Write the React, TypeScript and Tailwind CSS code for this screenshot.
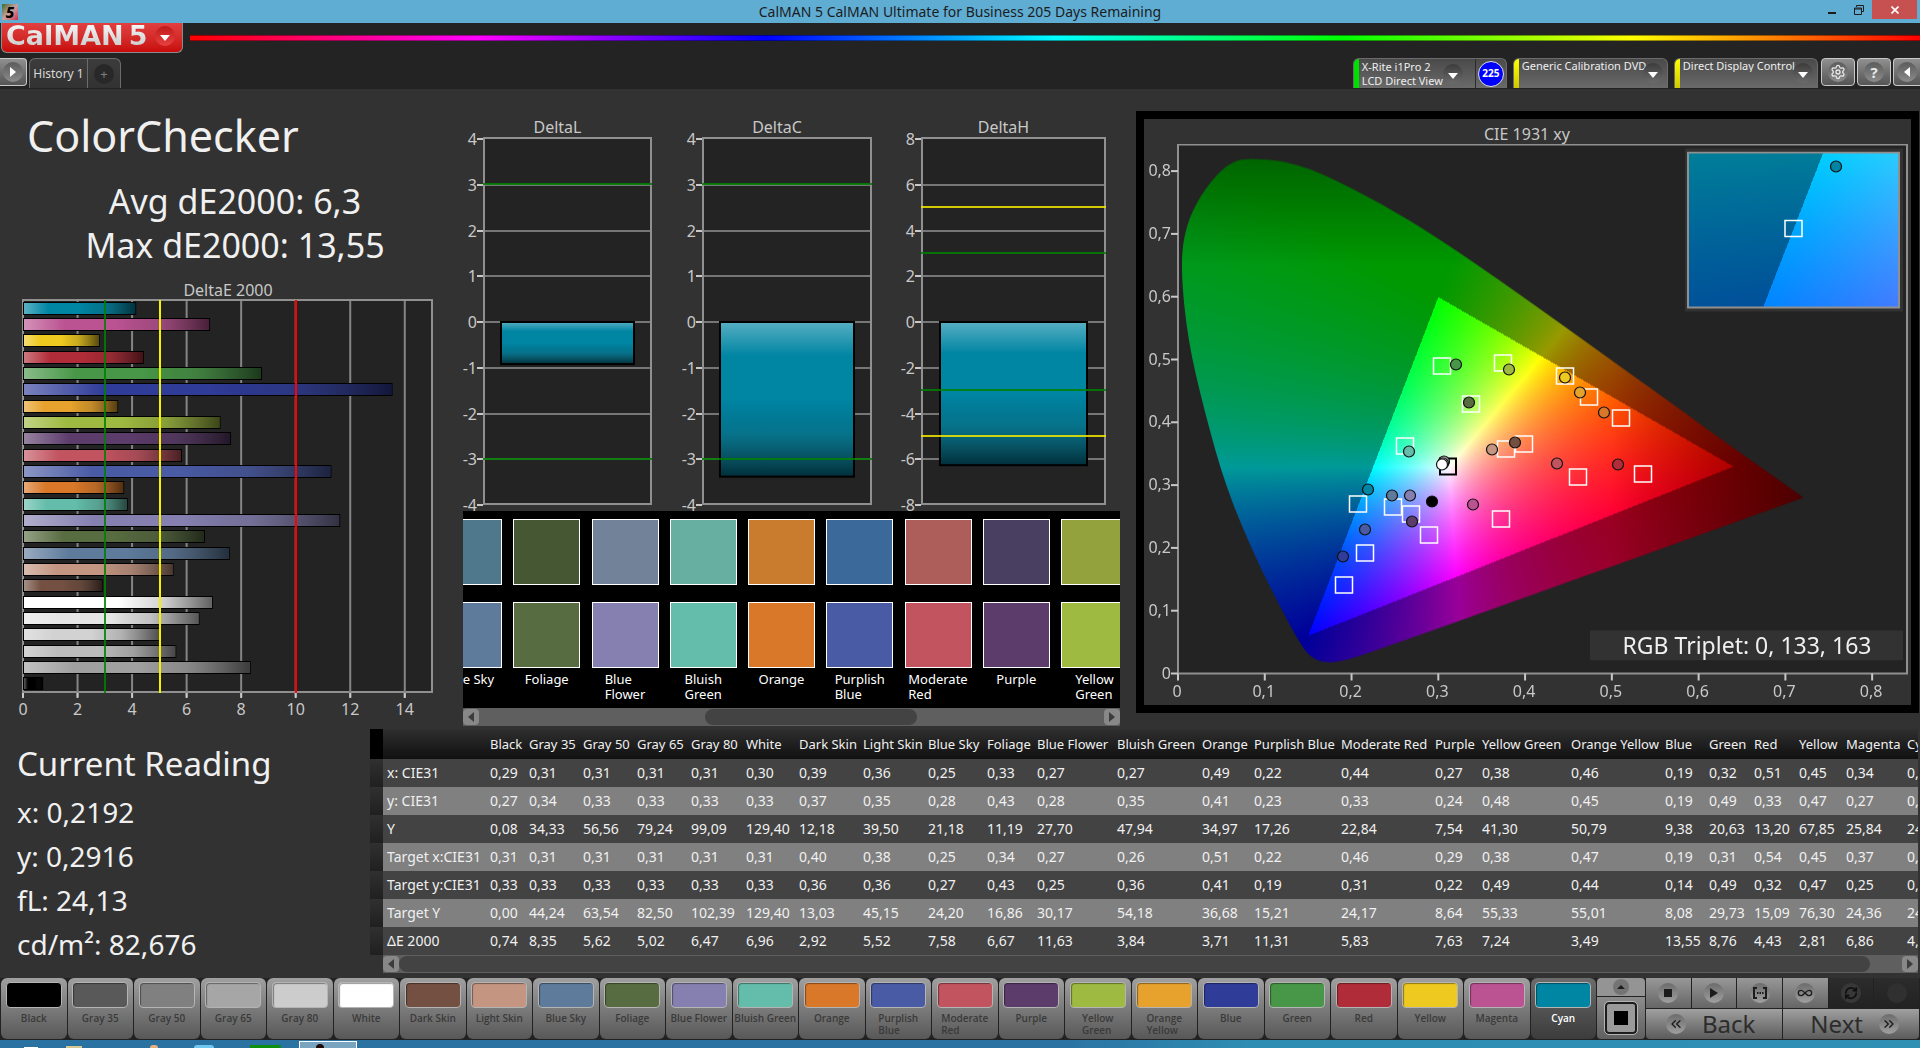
import { useEffect, useRef } from 'react';
import type { ReactNode } from 'react';
import { ChevronsLeft, ChevronsRight, Infinity as InfinityIcon, RefreshCw, Settings } from 'lucide-react';

type Patch = {
  name: string;
  color: string;
  width: number;
  values: string[];
};

const ROW_LABELS = ['x: CIE31', 'y: CIE31', 'Y', 'Target x:CIE31', 'Target y:CIE31', 'Target Y', 'ΔE 2000'];

const PATCHES: Patch[] = [
  { name: 'Black', color: '#000000', width: 39, values: ['0,29', '0,27', '0,08', '0,31', '0,33', '0,00', '0,74'] },
  { name: 'Gray 35', color: '#595959', width: 54, values: ['0,31', '0,34', '34,33', '0,31', '0,33', '44,24', '8,35'] },
  { name: 'Gray 50', color: '#808080', width: 54, values: ['0,31', '0,33', '56,56', '0,31', '0,33', '63,54', '5,62'] },
  { name: 'Gray 65', color: '#a6a6a6', width: 54, values: ['0,31', '0,33', '79,24', '0,31', '0,33', '82,50', '5,02'] },
  { name: 'Gray 80', color: '#cccccc', width: 55, values: ['0,31', '0,33', '99,09', '0,31', '0,33', '102,39', '6,47'] },
  { name: 'White', color: '#ffffff', width: 53, values: ['0,30', '0,33', '129,40', '0,31', '0,33', '129,40', '6,96'] },
  { name: 'Dark Skin', color: '#735041', width: 64, values: ['0,39', '0,37', '12,18', '0,40', '0,36', '13,03', '2,92'] },
  { name: 'Light Skin', color: '#c49682', width: 65, values: ['0,36', '0,35', '39,50', '0,38', '0,36', '45,15', '5,52'] },
  { name: 'Blue Sky', color: '#5e7b9c', width: 59, values: ['0,25', '0,28', '21,18', '0,25', '0,27', '24,20', '7,58'] },
  { name: 'Foliage', color: '#586c41', width: 50, values: ['0,33', '0,43', '11,19', '0,34', '0,43', '16,86', '6,67'] },
  { name: 'Blue Flower', color: '#8580b0', width: 80, values: ['0,27', '0,28', '27,70', '0,27', '0,25', '30,17', '11,63'] },
  { name: 'Bluish Green', color: '#64bdaa', width: 85, values: ['0,27', '0,35', '47,94', '0,26', '0,36', '54,18', '3,84'] },
  { name: 'Orange', color: '#d97829', width: 52, values: ['0,49', '0,41', '34,97', '0,51', '0,41', '36,68', '3,71'] },
  { name: 'Purplish Blue', color: '#4a5ba5', width: 87, values: ['0,22', '0,23', '17,26', '0,22', '0,19', '15,21', '11,31'] },
  { name: 'Moderate Red', color: '#c25460', width: 94, values: ['0,44', '0,33', '22,84', '0,46', '0,31', '24,17', '5,83'] },
  { name: 'Purple', color: '#5c3c6b', width: 47, values: ['0,27', '0,24', '7,54', '0,29', '0,22', '8,64', '7,63'] },
  { name: 'Yellow Green', color: '#9fba40', width: 89, values: ['0,38', '0,48', '41,30', '0,38', '0,49', '55,33', '7,24'] },
  { name: 'Orange Yellow', color: '#e6a22c', width: 94, values: ['0,46', '0,45', '50,79', '0,47', '0,44', '55,01', '3,49'] },
  { name: 'Blue', color: '#2f3c98', width: 44, values: ['0,19', '0,19', '9,38', '0,19', '0,14', '8,08', '13,55'] },
  { name: 'Green', color: '#489647', width: 45, values: ['0,32', '0,49', '20,63', '0,31', '0,49', '29,73', '8,76'] },
  { name: 'Red', color: '#b02c38', width: 45, values: ['0,51', '0,33', '13,20', '0,54', '0,32', '15,09', '4,43'] },
  { name: 'Yellow', color: '#eec91f', width: 47, values: ['0,45', '0,47', '67,85', '0,45', '0,47', '76,30', '2,81'] },
  { name: 'Magenta', color: '#bb5392', width: 61, values: ['0,34', '0,27', '25,84', '0,37', '0,25', '24,36', '6,86'] },
  { name: 'Cyan', color: '#0085a3', width: 60, values: ['0,22', '0,29', '24,13', '0,21', '0,27', '24,66', '4,15'] },
];

const BAR_COLORS: Record<string, string> = {
  'Gray 35': '#a0a0a0',
  'Gray 50': '#bcbcbc',
  'Gray 65': '#d2d2d2',
  'Gray 80': '#e6e6e6',
};

const COMPARISON = [
  { lines: ['Blue Sky'], actual: '#4f788c', target: '#5e7b9c' },
  { lines: ['Foliage'], actual: '#455833', target: '#586c41' },
  { lines: ['Blue', 'Flower'], actual: '#728299', target: '#8580b0' },
  { lines: ['Bluish', 'Green'], actual: '#67afa1', target: '#64bdaa' },
  { lines: ['Orange'], actual: '#c97b2e', target: '#d97829' },
  { lines: ['Purplish', 'Blue'], actual: '#3b6999', target: '#4a5ba5' },
  { lines: ['Moderate', 'Red'], actual: '#ad5d5a', target: '#c25460' },
  { lines: ['Purple'], actual: '#493f60', target: '#5c3c6b' },
  { lines: ['Yellow', 'Green'], actual: '#93a23c', target: '#9fba40' },
];

// ---- DeltaE 2000 ----

function DeltaEChart() {
  const left = 24;
  const unit = 27.27;
  const rowHeight = 392 / 24;
  const bars = [...PATCHES].reverse();
  return (
    <svg viewBox="1 279 462 440" className="mt-3 block w-[462px]" fill="#c8c8c8">
      <defs>
        <linearGradient id="shadeX">
          <stop offset="0" stopColor="#fff" stopOpacity="0.36" />
          <stop offset="0.22" stopColor="#fff" stopOpacity="0" />
          <stop offset="0.5" stopColor="#000" stopOpacity="0" />
          <stop offset="0.72" stopColor="#222" stopOpacity="0.18" />
          <stop offset="1" stopColor="#000" stopOpacity="0.62" />
        </linearGradient>
      </defs>
      <text x="229" y="296" fontSize="16" textAnchor="middle">DeltaE 2000</text>
      <rect x="24" y="300" width="409" height="392" fill="#232323" stroke="#909090" strokeWidth="2" />
      {[2, 4, 6, 8, 10, 12, 14].map((v) => (
        <rect key={v} x={left + v * unit - 1} y="301" width="2" height="396" fill="#858585" />
      ))}
      {[0, 2, 4, 6, 8, 10, 12, 14].map((v) => (
        <g key={v}>
          <rect x={left + v * unit - 1} y="693" width="2" height="5" fill="#c8c8c8" />
          <text x={left + v * unit} y="715" fontSize="16" textAnchor="middle">{v}</text>
        </g>
      ))}
      {bars.map((p, i) => {
        const w = parseFloat(p.values[6].replace(',', '.')) * unit;
        const y = Math.round(300.5 + i * rowHeight + 1);
        return (
          <g key={p.name}>
            <rect x="24" y={y} width={w} height="13" fill="#000" />
            <rect x="25" y={y + 1} width={w - 2} height="11" fill={BAR_COLORS[p.name] ?? p.color} />
            <rect x="25" y={y + 1} width={w - 2} height="11" fill="url(#shadeX)" />
          </g>
        );
      })}
      <rect x="105" y="300" width="2" height="393" fill="#008000" fillOpacity="0.85" />
      <rect x="160" y="300" width="2" height="393" fill="#f0f000" />
      <rect x="296" y="300" width="2" height="393" fill="#ff0000" />
    </svg>
  );
}

// ---- DeltaL / DeltaC / DeltaH ----

type DeltaProps = {
  title: string;
  x: number;
  width: number;
  max: number;
  value: number;
  limits: { at: number; color: string }[];
};

function DeltaPlot({ title, x, width, max, value, limits }: DeltaProps) {
  const zero = 322;
  const unit = 183 / max;
  const step = max / 4;
  const ticks = [4, 3, 2, 1, 0, -1, -2, -3, -4].map((t) => t * step);
  const barX = x + Math.round(width * 0.1);
  const barW = width - 2 * Math.round(width * 0.1);
  const barH = Math.abs(value) * unit;
  return (
    <g>
      <text x={x + width / 2 - 10} y="133" fontSize="16" textAnchor="middle">{title}</text>
      <rect x={x} y="138" width={width} height="366" fill="#232323" />
      {ticks.map((t) => (
        <g key={t}>
          {Math.abs(t) < max && (
            <rect x={x} y={Math.round(zero - t * unit) - 1} width={width} height="2" fill="#767676" />
          )}
          <rect x={x - 7} y={Math.round(zero - t * unit) - 1} width="6" height="2" fill="#c8c8c8" />
          <text x={x - 7} y={zero - t * unit + 6} fontSize="16" textAnchor="end">{t}</text>
        </g>
      ))}
      <rect x={x} y="138" width={width} height="366" fill="none" stroke="#909090" strokeWidth="2" />
      <rect x={barX} y={zero} width={barW} height={barH} fill="#0085a3" />
      <rect x={barX} y={zero} width={barW} height={barH} fill="url(#shadeY)" stroke="#000" strokeWidth="2" />
      {limits.map((l) => (
        <rect key={l.at} x={x - 1} y={Math.floor(zero - l.at * unit) - 1} width={width + 2} height="2" fill={l.color} fillOpacity="0.85" />
      ))}
    </g>
  );
}

function DeltaCharts() {
  const green = '#008000';
  const yellow = '#f0e800';
  return (
    <svg viewBox="462 89 658 422" className="block w-[658px]" fill="#c8c8c8">
      <defs>
        <linearGradient id="shadeY" x1="0" y1="0" x2="0" y2="1">
          <stop offset="0" stopColor="#fff" stopOpacity="0.34" />
          <stop offset="0.22" stopColor="#fff" stopOpacity="0" />
          <stop offset="0.5" stopColor="#000" stopOpacity="0" />
          <stop offset="0.72" stopColor="#222" stopOpacity="0.18" />
          <stop offset="1" stopColor="#000" stopOpacity="0.65" />
        </linearGradient>
      </defs>
      <DeltaPlot title="DeltaL" x={484} width={167} max={4} value={-0.92}
        limits={[{ at: 3, color: green }, { at: -3, color: green }]} />
      <DeltaPlot title="DeltaC" x={703} width={168} max={4} value={-3.38}
        limits={[{ at: 3, color: green }, { at: -3, color: green }]} />
      <DeltaPlot title="DeltaH" x={922} width={183} max={8} value={-6.26}
        limits={[{ at: 5, color: yellow }, { at: 3, color: green }, { at: -3, color: green }, { at: -5, color: yellow }]} />
    </svg>
  );
}

// ---- CIE 1931 xy ----

const X0 = 1178;
const Y0 = 672;
const SX = 867.7;
const SY = 628;

const LOCUS: [number, number][] = [
  [0.169, 0.0175], [0.158, 0.022], [0.145, 0.037], [0.12, 0.1], [0.09, 0.182], [0.0557, 0.2945],
  [0.03, 0.42], [0.011, 0.534], [0.0035, 0.64], [0.0065, 0.7], [0.0208, 0.7516], [0.0445, 0.796],
  [0.065, 0.818], [0.0847, 0.821], [0.115, 0.818], [0.138, 0.811], [0.1662, 0.797], [0.2365, 0.748],
  [0.3016, 0.6923], [0.3731, 0.6245], [0.4441, 0.5547], [0.5125, 0.4866], [0.5752, 0.4242], [0.627, 0.3725],
  [0.7187, 0.2825], [0.7205, 0.2805], [0.7187, 0.2795], [0.2186, 0.031], [0.185, 0.0185],
];

function tracePath(ctx: CanvasRenderingContext2D, toPx: (p: [number, number]) => [number, number]) {
  const pts = LOCUS.map(toPx);
  const n = pts.length;
  ctx.beginPath();
  for (let i = 0; i <= n; i++) {
    const [ax, ay] = pts[i % n];
    const [bx, by] = pts[(i + 1) % n];
    if (i === 0) ctx.moveTo((ax + bx) / 2, (ay + by) / 2);
    else ctx.quadraticCurveTo(ax, ay, (ax + bx) / 2, (ay + by) / 2);
  }
  ctx.closePath();
}

function chromaColor(x: number, y: number): [number, number, number] {
  const X = x / y;
  const Z = (1 - x - y) / y;
  const r = 3.2406 * X - 1.5372 - 0.4986 * Z;
  const g = -0.9689 * X + 1.8758 + 0.0415 * Z;
  const b = 0.0557 * X - 0.204 + 1.057 * Z;
  const high = Math.max(r, g, b);
  // colors outside Rec.709 are clamped and dimmed
  let level = Math.min(r, g, b) < 0 ? 0.6 : 1;
  if (x > 0.5) level *= Math.max(0.5, 1 - (x - 0.5) * 2.3);
  if (y > 0.65) level *= 1 - (y - 0.65) * 2;
  const enc = (v: number) => (255 * level * Math.max(0, v)) / high;
  return [enc(r), enc(g), enc(b)];
}

type GamutProps = { x0: number; x1: number; y0: number; y1: number; width: number; height: number; clip?: boolean };

function GamutCanvas({ x0, x1, y0, y1, width, height, clip }: GamutProps) {
  const ref = useRef<HTMLCanvasElement>(null);

  useEffect(() => {
    const ctx = ref.current?.getContext('2d');
    if (!ctx) return;
    const img = ctx.createImageData(width, height);
    for (let j = 0; j < height; j++) {
      for (let i = 0; i < width; i++) {
        const x = x0 + ((i + 0.5) / width) * (x1 - x0);
        const y = Math.max(0.001, y1 - ((j + 0.5) / height) * (y1 - y0));
        const [r, g, b] = chromaColor(x, y);
        const k = (j * width + i) * 4;
        img.data[k] = r;
        img.data[k + 1] = g;
        img.data[k + 2] = b;
        img.data[k + 3] = 255;
      }
    }
    ctx.putImageData(img, 0, 0);
    if (clip) {
      ctx.globalCompositeOperation = 'destination-in';
      tracePath(ctx, ([x, y]) => [((x - x0) / (x1 - x0)) * width, ((y1 - y) / (y1 - y0)) * height]);
      ctx.fill();
      ctx.globalCompositeOperation = 'source-over';
    }
  }, [x0, x1, y0, y1, width, height, clip]);

  return <canvas ref={ref} width={width} height={height} className="block" />;
}

const TARGETS = [
  [1442, 364], [1503, 361], [1565, 374], [1589, 395], [1621, 416], [1471, 402], [1405, 444], [1506, 447],
  [1524, 442], [1578, 475], [1643, 472], [1358, 502], [1393, 505], [1411, 512], [1429, 533], [1501, 517],
  [1365, 551], [1344, 583],
];

const MEASURED: [number, number, string][] = [
  [1456, 363, '#489647'], [1509, 368, '#9fba40'], [1565, 376, '#eec91f'], [1580, 391, '#e6a22c'],
  [1604, 411, '#d97829'], [1469, 401, '#586c41'], [1409, 450, '#64bdaa'], [1492, 448, '#c49682'],
  [1515, 441, '#735041'], [1557, 462, '#c25460'], [1618, 463, '#b02c38'], [1368, 488, '#0085a3'],
  [1392, 494, '#5e7b9c'], [1410, 494, '#8580b0'], [1432, 500, '#000000'], [1473, 503, '#bb5392'],
  [1412, 520, '#5c3c6b'], [1365, 528, '#4a5ba5'], [1343, 555, '#2f3c98'], [1444, 460, '#a0a0a0'],
  [1443, 462, '#dddddd'], [1442, 463, '#ffffff'],
];

function CieChart() {
  const ticks = [0, 1, 2, 3, 4, 5, 6, 7, 8];
  const label = (t: number) => (t === 0 ? '0' : `0,${t}`);
  return (
    <svg viewBox="1144 118 767 585" className="block h-full w-full" fill="#c8c8c8">
      <text x="1527" y="138" fontSize="16" textAnchor="middle">CIE 1931 xy</text>
      <rect x="1178" y="143" width="729" height="529" fill="#232323" />
      <foreignObject x="1178" y="143" width="729" height="529">
        <GamutCanvas x0={0} x1={0.84} y0={0} y1={0.8434} width={729} height={529} clip />
      </foreignObject>
      <rect x="1178" y="143" width="729" height="529" fill="none" stroke="#909090" strokeWidth="2" />
      {ticks.map((t) => (
        <g key={t}>
          <rect x={X0 + t * SX * 0.1 - 1} y="672" width="2" height="7" />
          <text x={X0 + t * SX * 0.1 - 1} y="695" fontSize="16" textAnchor="middle">{label(t)}</text>
          <rect x="1171" y={Y0 - t * SY * 0.1 - 1} width="7" height="2" />
          <text x="1171" y={Y0 - t * SY * 0.1 + 5} fontSize="16" textAnchor="end">{label(t)}</text>
        </g>
      ))}

      {TARGETS.map(([x, y]) => (
        <rect key={`${x}-${y}`} x={x - 8.5} y={y - 7.5} width="17" height="16" fill="none" stroke="#fff" strokeWidth="1.5" />
      ))}
      <rect x="1440" y="457" width="16" height="16" fill="none" stroke="#000" strokeWidth="2" />
      {MEASURED.map(([x, y, c]) => (
        <circle key={`${x}-${y}`} cx={x} cy={y} r="5.5" fill={c} stroke="#111" strokeWidth="1.2" />
      ))}

      <rect x="1685" y="147" width="218" height="163" fill="#323232" />
      <foreignObject x="1688" y="151" width="211" height="155">
        <GamutCanvas x0={0.181} x1={0.237} y0={0.2433} y1={0.3009} width={211} height={155} />
      </foreignObject>
      <rect x="1688" y="151" width="211" height="155" fill="none" stroke="#909090" strokeWidth="2" />
      <rect x="1785" y="219" width="17" height="16" fill="none" stroke="#fff" strokeWidth="1.5" />
      <circle cx="1836" cy="165" r="5.5" fill="#0085a3" stroke="#111" strokeWidth="1.2" />

      <rect x="1590" y="629" width="313" height="30" fill="#323232" />
      <text x="1747" y="652" fontSize="23" fill="#f0f0f0" textAnchor="middle">RGB Triplet: 0, 133, 163</text>
    </svg>
  );
}

// ---- Shared bits ----

function Scrollbar({ thumb }: { thumb: string }) {
  return (
    <div className="flex h-[18px] items-center bg-[#5f5f5f]">
      <button aria-label="Scroll left" className="flex h-4 w-4 items-center justify-center rounded bg-[#888888]">
        <svg viewBox="0 0 6 10" className="h-[10px] w-[6px]"><path d="M6 0v10L0 5z" fill="#3c3c3c" /></svg>
      </button>
      <div className="flex h-4 min-w-0 flex-1">
        <div className={`h-4 rounded-lg bg-[#434343] ${thumb}`} />
      </div>
      <button aria-label="Scroll right" className="flex h-4 w-4 items-center justify-center rounded bg-[#888888]">
        <svg viewBox="0 0 6 10" className="h-[10px] w-[6px]"><path d="M0 0v10l6-5z" fill="#3c3c3c" /></svg>
      </button>
    </div>
  );
}

function DropCircle() {
  return (
    <span className="flex h-5 w-5 items-center justify-center rounded-full bg-linear-to-b from-[#3c3c3c] to-[#6c6c6c]">
      <svg viewBox="0 0 10 6" className="mt-1 h-[6px] w-[10px]"><path d="M0 0h10L5 6z" fill="#fff" /></svg>
    </span>
  );
}

function SourceSelect({ name, value }: { name: string; value: string }) {
  return (
    <div className="relative flex h-[30px] overflow-hidden rounded-t-md border border-b-0 border-[#6c6c6c] bg-linear-to-b from-[#4a4a4a] to-[#6a6a6a]">
      <span className="w-[5px] bg-linear-to-b from-[#ffff00] to-[#d0c800]" />
      <select aria-label={name} className="w-full appearance-none bg-transparent px-[3px] pb-4 text-[11px] leading-[14px] text-[#eeeeee]">
        <option>{value}</option>
      </select>
      <span className="pointer-events-none absolute top-1 right-1"><DropCircle /></span>
    </div>
  );
}

function ToolButton({ label, children }: { label: string; children: ReactNode }) {
  return (
    <button aria-label={label} className="flex h-7 w-[34px] shrink-0 items-center justify-center rounded border border-[#c8c8c8] bg-linear-to-b from-[#909090] to-[#555555]">
      <span className="flex h-5 w-5 items-center justify-center rounded-full bg-linear-to-b from-[#5c5c5c] to-[#8c8c8c] text-[#e8e8e8]">
        {children}
      </span>
    </button>
  );
}

function TitleBar() {
  return (
    <div className="grid h-[23px] shrink-0 grid-cols-[1fr_auto_1fr] bg-[#60add4] text-[#1c1c1c]">
      <div className="flex items-center pl-[2px]">
        <span className="flex h-4 w-4 items-center justify-center bg-linear-to-br from-[#3c6a2c] via-[#c8a0a0] to-[#d02050] text-[15px] leading-4 font-extrabold text-black italic">
          5
        </span>
      </div>
      <p className="text-[14px] leading-[23px]">CalMAN 5 CalMAN Ultimate for Business 205 Days Remaining</p>
      <div className="flex items-start justify-end pr-[3px]">
        <button aria-label="Minimize" className="flex h-[19px] w-[26px] items-center justify-center">
          <svg viewBox="0 0 8 10" className="h-[10px] w-2"><path d="M0 7h8v2H0z" fill="#1c1c1c" /></svg>
        </button>
        <button aria-label="Restore" className="flex h-[19px] w-[27px] items-center justify-center">
          <svg viewBox="0 0 10 10" className="h-[10px] w-[10px]" fill="none" stroke="#1c1c1c">
            <path d="M2.500 2V.5h7v6H8" />
            <path d="M.5 3h7v6.500h-7z M.5 4h7" />
          </svg>
        </button>
        <button aria-label="Close" className="flex h-[19px] w-[45px] items-center justify-center bg-[#c75050]">
          <svg viewBox="0 0 8 8" className="h-2 w-2"><path d="M.5.5l7 7M7.500.5l-7 7" stroke="#fff" strokeWidth="1.600" /></svg>
        </button>
      </div>
    </div>
  );
}

function Header() {
  return (
    <header className="flex h-[66px] shrink-0 flex-col justify-between bg-[#232323]">
      <div className="flex">
        <button className="ml-px flex h-[30px] w-[182px] items-center gap-2 rounded-b-md border border-t-0 border-[#8c8c8c] bg-linear-to-b from-[#e04040] to-[#c80808] pb-1 pl-1 font-['DejaVu_Sans',sans-serif]">
          <span className="bg-linear-to-b from-[#f8f8f8] to-[#c8c8c8] bg-clip-text text-[27px] leading-[26px] font-bold whitespace-nowrap text-transparent">
            CalMAN<span className="ml-[5px]">5</span>
          </span>
          <span className="flex h-5 w-5 shrink-0 items-center justify-center rounded-full bg-linear-to-b from-[#c01818] to-[#e84040]">
            <svg viewBox="0 0 10 6" className="mt-1 h-[6px] w-[10px]"><path d="M0 0h10L5 6z" fill="#fff" /></svg>
          </span>
        </button>
        <div className="mt-3 ml-[7px] h-[6px] flex-1 border-y border-black/40 bg-[linear-gradient(to_right,#f00,#f0f,#00f,#0ff,#0f0,#ff0,#f00)]" />
      </div>

      <div className="flex h-[31px] items-start">
        <button aria-label="Expand" className="flex h-7 w-[27px] items-center justify-center rounded-r border border-l-0 border-[#c8c8c8] bg-linear-to-b from-[#909090] to-[#555555]">
          <span className="flex h-5 w-5 items-center justify-center rounded-full bg-linear-to-b from-[#5c5c5c] to-[#8c8c8c]">
            <svg viewBox="0 0 6 10" className="h-[10px] w-[6px]"><path d="M0 0v10l6-5z" fill="#fff" /></svg>
          </span>
        </button>
        <div className="ml-[2px] flex h-[30px] rounded-t-md border border-b-0 border-[#6c6c6c] bg-linear-to-b from-[#3c3c3c] to-[#323232]">
          <button className="w-[58px] border-r border-[#6c6c6c] text-[12px] whitespace-nowrap text-[#d8d8d8]">History 1</button>
          <button aria-label="Add history" className="flex w-8 items-center justify-center">
            <span className="flex h-5 w-5 items-center justify-center rounded-full bg-[#282828] text-[13px] leading-5 text-[#808080]">+</span>
          </button>
        </div>

        <div className="ml-auto flex items-start gap-[6px]">
          <div className="flex h-[30px] w-[154px] overflow-hidden rounded-t-md border border-b-0 border-[#6c6c6c] bg-linear-to-b from-[#4a4a4a] to-[#6a6a6a]">
            <span className="w-[5px] bg-[#00e000]" />
            <button className="flex flex-1 items-center justify-between pr-3 pl-[3px] text-left text-[11px] leading-[14px] whitespace-nowrap text-[#eeeeee]">
              <span>X-Rite i1Pro 2<br />LCD Direct View</span>
              <DropCircle />
            </button>
            <span className="flex w-8 items-center justify-center border-l border-[#2c2c2c]">
              <span className="flex h-[26px] w-[26px] items-center justify-center rounded-full border border-[#e0e0e0] bg-[#0000ff] text-[10px] font-bold text-white">225</span>
            </span>
          </div>
          <div className="w-[155px]"><SourceSelect name="Source" value="Generic Calibration DVD" /></div>
          <div className="w-[144px]"><SourceSelect name="Display" value="Direct Display Control" /></div>
          <div className="-ml-[3px] flex gap-[2px]">
            <ToolButton label="Settings"><Settings className="h-4 w-4" /></ToolButton>
            <ToolButton label="Help"><span className="text-[15px] leading-5 font-bold">?</span></ToolButton>
            <button aria-label="Collapse" className="flex h-7 w-[27px] items-center justify-center rounded-l border border-r-0 border-[#c8c8c8] bg-linear-to-b from-[#909090] to-[#555555]">
              <span className="flex h-5 w-5 items-center justify-center rounded-full bg-linear-to-b from-[#5c5c5c] to-[#8c8c8c]">
                <svg viewBox="0 0 6 10" className="h-[10px] w-[6px]"><path d="M6 0v10L0 5z" fill="#fff" /></svg>
              </span>
            </button>
          </div>
        </div>
      </div>
    </header>
  );
}

function SwatchStrip() {
  return (
    <div className="ml-px bg-black">
      <div className="h-[197px] overflow-hidden pt-2">
        <div className="-ml-7 flex w-[693px] justify-between">
          {COMPARISON.map((c) => (
            <div key={c.lines.join(' ')} className="flex w-[67px] shrink-0 flex-col items-center">
              <div className="h-[66px] w-full border border-white" style={{ background: c.actual }} />
              <div className="mt-[17px] h-[66px] w-full border border-white" style={{ background: c.target }} />
              <p className="mt-1 text-[13px] leading-[15px] text-white">
                {c.lines.map((l) => <span key={l} className="block">{l}</span>)}
              </p>
            </div>
          ))}
        </div>
      </div>
      <Scrollbar thumb="ml-[226px] w-[212px]" />
    </div>
  );
}

function ReadingTable() {
  return (
    <div className="min-w-0 flex-1 pr-[2px]">
      <div className="overflow-hidden">
        <table className="w-[1540px] table-fixed border-collapse text-[14px] leading-[20px] text-[#f0f0f0]">
          <colgroup>
            <col style={{ width: 13 }} />
            <col style={{ width: 103 }} />
            {PATCHES.map((p) => <col key={p.name} style={{ width: p.width }} />)}
          </colgroup>
          <thead>
            <tr className="h-[30px] bg-linear-to-b from-[#2f2f2f] to-[#111111] text-[13px]">
              <td className="bg-black" />
              <td />
              {PATCHES.map((p) => (
                <th key={p.name} scope="col" className="p-0 pl-1 text-left font-normal whitespace-nowrap">{p.name}</th>
              ))}
            </tr>
          </thead>
          <tbody>
            {ROW_LABELS.map((label, r) => (
              <tr key={label} className="h-7 odd:bg-[#434343] even:bg-[#808080]">
                <td className="bg-linear-to-b from-[#303030] to-[#202020]" />
                <th scope="row" className="p-0 pl-1 text-left font-normal whitespace-nowrap">{label}</th>
                {PATCHES.map((p) => (
                  <td key={p.name} className="p-0 pl-1 whitespace-nowrap">{p.values[r]}</td>
                ))}
              </tr>
            ))}
          </tbody>
        </table>
      </div>
      <div className="ml-[13px]"><Scrollbar thumb="mr-8 w-full" /></div>
    </div>
  );
}

function CellIcon({ children }: { children?: ReactNode }) {
  return (
    <span className="flex h-5 w-5 items-center justify-center rounded-full bg-linear-to-b from-[#6c6c6c] to-[#a0a0a0] text-[#1c1c1c]">
      {children}
    </span>
  );
}

function PatchBar() {
  const cell = 'flex flex-1 items-center justify-center bg-linear-to-b from-[#989898] to-[#666666]';
  const dark = 'flex flex-1 items-center justify-center bg-linear-to-b from-[#2c2c2c] to-[#222222]';
  return (
    <footer className="flex h-[62px] shrink-0 gap-px bg-[#222222] pr-px pb-px pl-px">
      <div className="flex min-w-0 flex-1 gap-px">
        {PATCHES.map((p) => {
          const active = p.name === 'Cyan';
          const two = ['Purplish Blue', 'Moderate Red', 'Yellow Green', 'Orange Yellow'].includes(p.name);
          return (
            <button
              key={p.name}
              className={`flex min-w-0 flex-1 flex-col items-center rounded-md bg-linear-to-b pt-1 font-['Open_Sans',sans-serif] text-[10px] leading-[12px] font-semibold ${
                active ? 'from-[#6c6c6c] to-[#3c3c3c] text-white' : 'from-[#a0a0a0] to-[#585858] text-[#3a3a3a]'
              }`}
            >
              <span className="h-[26px] w-14 shrink-0 rounded border border-[#b4b4b4] shadow-[inset_1px_1px_1px_rgba(0,0,0,0.4)]" style={{ background: p.color }} />
              <span className={`mt-1 text-left ${two ? '' : 'whitespace-nowrap'}`}>
                {two ? p.name.split(' ').map((w) => <span key={w} className="block">{w}</span>) : p.name}
              </span>
            </button>
          );
        })}
      </div>

      <div className="flex w-12 flex-col gap-px">
        <button aria-label="Scroll patches up" className="flex h-[18px] items-center justify-center rounded-t bg-[#949494]">
          <span className="flex h-4 w-4 items-center justify-center rounded-full bg-[#747474]">
            <svg viewBox="0 0 8 4" className="h-1 w-2"><path d="M0 4h8L4 0z" fill="#1c1c1c" /></svg>
          </span>
        </button>
        <button aria-label="Pattern window" className="flex flex-1 items-center justify-center rounded-b bg-linear-to-b from-[#8c8c8c] to-[#606060]">
          <span className="flex h-8 w-8 items-center justify-center rounded border-2 border-[#1c1c1c] bg-[#9a9a9a] outline outline-[#b4b4b4]">
            <span className="h-[14px] w-[14px] bg-black" />
          </span>
        </button>
      </div>

      <div className="flex w-[273px] flex-col gap-px">
        <div className="flex h-[30px] gap-px">
          <button aria-label="Stop" className={cell}><CellIcon><span className="h-2 w-2 bg-[#1c1c1c]" /></CellIcon></button>
          <button aria-label="Play" className={cell}>
            <CellIcon><svg viewBox="0 0 8 10" className="h-[10px] w-2"><path d="M0 0v10l8-5z" fill="#1c1c1c" /></svg></CellIcon>
          </button>
          <button aria-label="Read series" className={cell}>
            <CellIcon>
              <svg viewBox="0 0 14 12" className="h-3 w-[14px]" fill="none" stroke="#1c1c1c" strokeWidth="2">
                <path d="M4 1H1v10h3M10 1h3v10h-3" />
                <path d="M4 6h1.500M6.500 6H8M9 6h1.500" />
              </svg>
            </CellIcon>
          </button>
          <button aria-label="Continuous" className={cell}><CellIcon><InfinityIcon className="h-4 w-4" /></CellIcon></button>
          <button aria-label="Refresh" className={dark}>
            <span className="flex h-5 w-5 items-center justify-center rounded-full bg-[#383838] text-[#101010]"><RefreshCw className="h-[14px] w-[14px]" strokeWidth={3} /></span>
          </button>
          <button aria-label="Empty" className={dark}><span className="h-5 w-5 rounded-full bg-[#303030]" /></button>
        </div>
        <div className="flex flex-1 gap-px text-[24px] leading-[30px] text-[#2c2c2c]">
          <button className="flex flex-1 items-center gap-4 rounded-bl bg-linear-to-b from-[#a0a0a0] to-[#5c5c5c] pl-5">
            <CellIcon><ChevronsLeft className="h-4 w-4" /></CellIcon>
            Back
          </button>
          <button className="flex flex-1 items-center justify-end gap-4 rounded-br bg-linear-to-b from-[#a0a0a0] to-[#5c5c5c] pr-5">
            Next
            <CellIcon><ChevronsRight className="h-4 w-4" /></CellIcon>
          </button>
        </div>
      </div>
    </footer>
  );
}

function Taskbar() {
  return (
    <div className="flex h-2 shrink-0 items-end overflow-hidden bg-linear-to-r from-[#2a72a2] from-55% via-[#2e8db2] via-65% to-[#2f90b4]">
      <span className="ml-6 h-px w-[14px] bg-white" />
      <span className="ml-7 h-[2px] w-4 bg-[#d8c890]" />
      <span className="ml-[68px] h-[3px] w-2 rounded-t bg-[#e8b080]" />
      <span className="ml-9 h-[3px] w-5 rounded-t-full bg-[#70c8f0]" />
      <span className="ml-9 h-[3px] w-[31px] bg-[#0c9010]" />
      <span className="ml-[18px] flex h-[7px] w-[58px] items-end border border-b-0 border-white bg-[#78a4c0] pl-4">
        <span className="h-1 w-2 rounded-t bg-[#200808]" />
      </span>
    </div>
  );
}

export default function App() {
  return (
    <div className="flex h-screen flex-col overflow-hidden bg-[#232323] font-['Noto_Sans','Open_Sans',sans-serif]">
      <TitleBar />
      <Header />
      <main className="flex min-h-0 flex-1 flex-col bg-[#323232] pb-[5px]">
        <div className="flex min-h-0 flex-1">
          <section className="w-[462px] shrink-0 text-[#f0f0f0]">
            <h1 className="mt-4 pl-[27px] text-[43px] leading-[62px]">ColorChecker</h1>
            <div className="mt-3 pl-2 text-center text-[34px] leading-[44px]">
              <p>Avg dE2000: 6,3</p>
              <p>Max dE2000: 13,55</p>
            </div>
            <DeltaEChart />
          </section>
          <section className="w-[658px] shrink-0">
            <DeltaCharts />
            <SwatchStrip />
          </section>
          <section className="mt-[22px] mr-px mb-4 ml-4 min-w-0 flex-1 border-8 border-black">
            <CieChart />
          </section>
        </div>

        <div className="flex shrink-0">
          <section className="w-[370px] shrink-0 pt-[13px] pl-[17px] text-[28px] leading-[44px] text-[#f0f0f0]">
            <h2 className="mb-1 text-[33px] leading-[44px]">Current Reading</h2>
            <p>x: 0,2192</p>
            <p>y: 0,2916</p>
            <p>fL: 24,13</p>
            <p>cd/m²: 82,676</p>
          </section>
          <ReadingTable />
        </div>
      </main>
      <PatchBar />
      <Taskbar />
    </div>
  );
}
